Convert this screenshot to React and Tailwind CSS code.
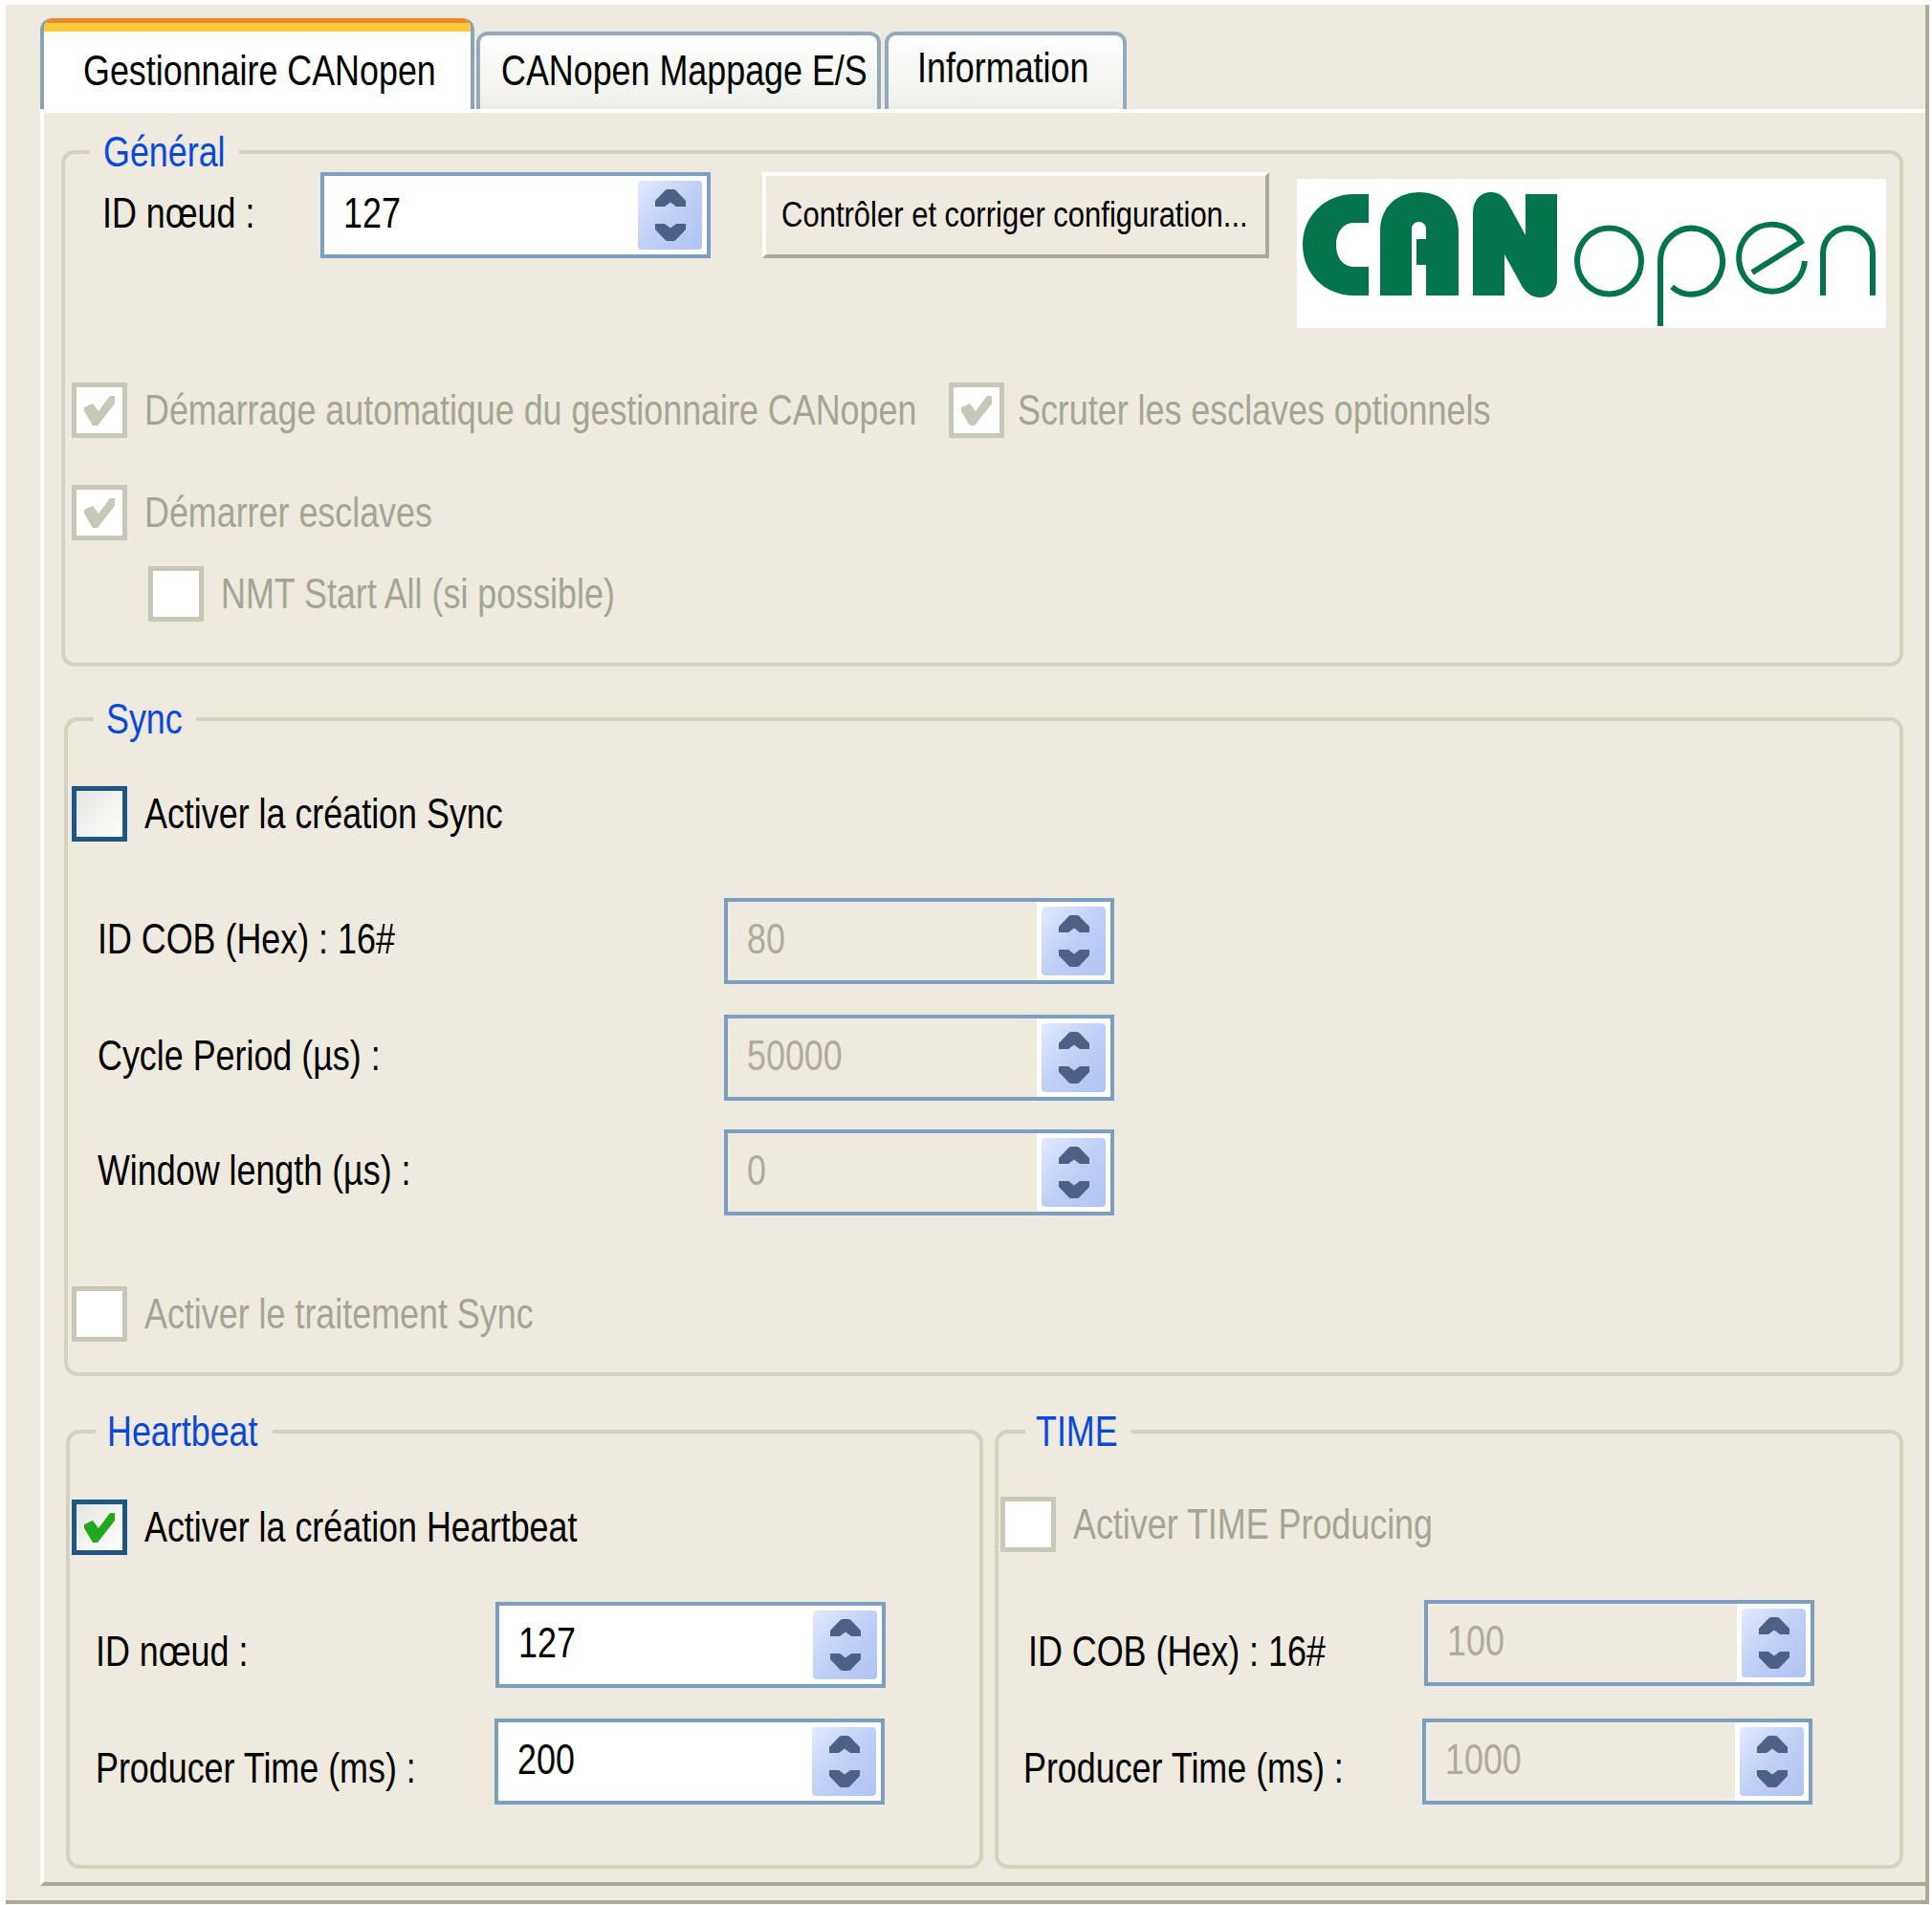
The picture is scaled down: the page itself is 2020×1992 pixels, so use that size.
import React from 'react';

// the reference uses a condensed Arial, squeezed here from Liberation Sans
const Txt = ({ children, className = 'scale-x-[.815]' }) => (
    <span className={`inline-block origin-left whitespace-nowrap ${className}`}>{children}</span>
);

// up/down arrows of the spin box
const Chevrons = () => (
    <svg width="32" height="54" viewBox="0 0 32 54" className="block">
        <path d="M0 12 L11 .5 Q16 -1 21 .5 L32 12 V18 H22 L16 13.5 L10 18 H0 Z" fill="#4d6187" />
        <path d="M0 36 H10 L16 40.5 L22 36 H32 V42 L21 53.5 Q16 55 11 53.5 L0 42 Z" fill="#4d6187" />
    </svg>
);

const Spinner = ({ value, disabled }) => (
    <div className={`w-[408px] h-[90px] flex border-4 border-[#7b9fc0] shrink-0 ${disabled ? 'bg-[#eeeadf]' : 'bg-white'}`}>
        <div className={`flex-1 pl-[20px] pt-[14px] text-[44px] leading-[50px] ${disabled ? 'text-[#aeab9b]' : 'text-black'}`}><Txt>{value}</Txt></div>
        <div className="w-[77px] bg-white flex items-center justify-center">
            <div className="w-[67px] h-[72px] rounded-[4px] bg-gradient-to-br from-[#e2eafe] via-[#c0cff6] to-[#b1c3f3] flex items-center justify-center">
                <Chevrons />
            </div>
        </div>
    </div>
);

const Check = ({ color }) => (
    <svg width="33" height="33" viewBox="0 0 33 33" className="block">
        <path d="M0 13 L9 9 L15 17 L27 1 L32 1 L32 9 L14 32 L9 32 L0 17 Z" fill={color} />
    </svg>
);

const CheckRow = ({ label, checked, active, labelClass = 'ml-[18px]', className = '' }) => (
    <div className={`flex items-center h-[58px] ${className}`}>
        <div className={`w-[58px] h-[58px] shrink-0 flex items-center justify-center border-[5px] ${active ? 'border-[#1f5582] bg-gradient-to-br from-[#e4e4e0] to-white' : 'border-[#c8c8b8] bg-white'}`}>
            {checked && <Check color={active ? '#22a81e' : '#c8c8b8'} />}
        </div>
        <span className={`text-[44px] leading-[50px] ${labelClass} ${active ? 'text-black' : 'text-[#a3a593]'}`}><Txt>{label}</Txt></span>
    </div>
);

const Group = ({ title, className = '', legendClass = '', children }) => (
    <fieldset className={`border-4 border-[#d3d3c0] rounded-[14px] min-w-0 ${className}`}>
        <legend className={`text-[44px] leading-[40px] text-[#0a48d8] ${legendClass}`}><Txt>{title}</Txt></legend>
        {children}
    </fieldset>
);

const FieldRow = ({ label, value, disabled, labelClass, className = '' }) => (
    <div className={`flex items-center ${className}`}>
        <span className={`shrink-0 text-[44px] leading-[50px] text-black ${labelClass}`}><Txt>{label}</Txt></span>
        <Spinner value={value} disabled={disabled} />
    </div>
);

const Logo = () => (
    <div className="w-[616px] h-[156px] bg-white ml-[29px] mt-[7px] shrink-0">
        <svg width="616" height="156" viewBox="0 0 616 156" className="block">
            <path d="M75 16 H60 C28 16 6 40 6 69 C6 98 28 122 60 122 H75 V92 H60 C48 92 41 82 41 69 C41 56 48 46 60 46 H75 Z" fill="#04744c" />
            <path d="M87 122 V55 C87 30 104 14 128 14 C152 14 169 30 169 55 V122 H135 V90 H125 V63 H135 V53 C135 48 132 45 127.5 45 C123 45 120 48 120 53 V122 Z" fill="#04744c" />
            <path d="M184 122 V36 C184 22 192 14 203 14 C212 14 217 19 221 26 L239 59 V16 H272 V106 C272 117 264 124 254 124 C245 124 238 118 234 110 L217 79 V122 Z" fill="#04744c" />
            <g fill="none" stroke="#04744c" strokeWidth="6">
                <ellipse cx="326.5" cy="86" rx="33.5" ry="34.5" />
                <path d="M380 154 V86 A32.5 34.5 0 1 1 392 113" />
                <path d="M476 98 L527 66 A34.5 35 0 1 0 531 86" />
                <path d="M550 122 V78 A26 26.5 0 0 1 602 78 V122" />
            </g>
        </svg>
    </div>
);

const App = () => {
    return (
        <div className="w-[2020px] h-[1992px] bg-white pt-[5px] pl-[6px] pr-[3px] pb-[1px] overflow-hidden font-['Liberation_Sans',sans-serif]">
            <div className="h-full bg-[#eeeadf] border-b-4 border-r-4 border-[#aba896] pl-[36px] pt-[14px]">
                {/* Tabs */}
                <div className="flex items-end h-[95px] text-[44px] leading-[50px] text-black">
                    <div className="w-[454px] h-[95px] bg-white rounded-t-[12px] border-x-4 border-[#8fa3ae] overflow-hidden">
                        <div className="h-[5px] bg-[#e68a2e]" />
                        <div className="h-[9px] bg-[#ffc838]" />
                        <div className="pl-[41px] pt-[16px]"><Txt>Gestionnaire CANopen</Txt></div>
                    </div>
                    <div className="ml-[2px] w-[423px] h-[81px] rounded-t-[12px] border-x-4 border-t-4 border-[#93a9bc] bg-gradient-to-b from-white to-[#eeeee9] pl-[22px] pt-[12px]"><Txt>CANopen Mappage E/S</Txt></div>
                    <div className="ml-[4px] w-[253px] h-[81px] rounded-t-[12px] border-x-4 border-t-4 border-[#93a9bc] bg-gradient-to-b from-white to-[#eeeee9] pl-[30px] pt-[9px]"><Txt>Information</Txt></div>
                </div>

                {/* Panel */}
                <div className="h-[1858px] border-t-4 border-l-4 border-white border-b-4 border-b-[#aba896] pl-[18px] pr-[23px] pt-[21px]">
                    <Group title="Général" className="h-[558px]" legendClass="ml-[26px] w-[156px] pl-[14px]">
                        <div className="flex items-start pt-px">
                            <span className="w-[267px] pl-[39px] pt-[18px] text-[44px] leading-[50px] text-black"><Txt>ID nœud :</Txt></span>
                            <Spinner value="127" />
                            <div className="ml-[54px] w-[530px] h-[90px] flex items-center pl-[16px] border-4 border-t-white border-l-white border-r-[#aba896] border-b-[#aba896] text-[37px] text-black">
                                <Txt className="scale-x-[.838]">Contrôler et corriger configuration...</Txt>
                            </div>
                            <Logo />
                        </div>
                        <div className="pl-[7px]">
                            <div className="flex mt-[57px]">
                                <CheckRow label="Démarrage automatique du gestionnaire CANopen" checked className="w-[917px]" />
                                <CheckRow label="Scruter les esclaves optionnels" checked labelClass="ml-[14px]" />
                            </div>
                            <CheckRow label="Démarrer esclaves" checked className="mt-[49px]" />
                            <CheckRow label="NMT Start All (si possible)" className="mt-[27px] ml-[80px]" />
                        </div>
                    </Group>

                    <Group title="Sync" className="h-[707px] mt-[35px] ml-[3px]" legendClass="ml-[27px] w-[107px] pl-[13px]">
                        <div className="pl-[4px]">
                            <CheckRow label="Activer la création Sync" active className="mt-[50px]" />
                            <FieldRow label="ID COB (Hex) : 16#" value="80" disabled labelClass="w-[682px] pl-[27px] pb-[5px]" className="mt-[59px]" />
                            <FieldRow label="Cycle Period (µs) :" value="50000" disabled labelClass="w-[682px] pl-[27px] pb-[5px]" className="mt-[32px]" />
                            <FieldRow label="Window length (µs) :" value="0" disabled labelClass="w-[682px] pl-[27px] pb-[5px]" className="mt-[30px]" />
                            <CheckRow label="Activer le traitement Sync" className="mt-[74px]" />
                        </div>
                    </Group>

                    <div className="flex mt-[38px] ml-[5px]">
                        <Group title="Heartbeat" className="w-[959px] h-[477px] pl-[2px]" legendClass="ml-[25px] w-[185px] pl-[12px]">
                            <CheckRow label="Activer la création Heartbeat" checked active className="mt-[51px]" />
                            <FieldRow label="ID nœud :" value="127" labelClass="w-[443px] pl-[25px] pt-[13px]" className="mt-[49px]" />
                            <FieldRow label="Producer Time (ms) :" value="200" labelClass="w-[442px] pl-[25px] pt-[13px]" className="mt-[32px]" />
                        </Group>
                        <Group title="TIME" className="w-[950px] h-[477px] ml-[12px] pl-[2px]" legendClass="ml-[26px] w-[111px] pl-[11px]">
                            <CheckRow label="Activer TIME Producing" className="mt-[48px]" />
                            <FieldRow label="ID COB (Hex) : 16#" value="100" disabled labelClass="w-[443px] pl-[29px] pt-[17px]" className="mt-[50px]" />
                            <FieldRow label="Producer Time (ms) :" value="1000" disabled labelClass="w-[441px] pl-[24px] pt-[13px]" className="mt-[34px]" />
                        </Group>
                    </div>
                </div>
            </div>
        </div>
    );
};

export default App;
